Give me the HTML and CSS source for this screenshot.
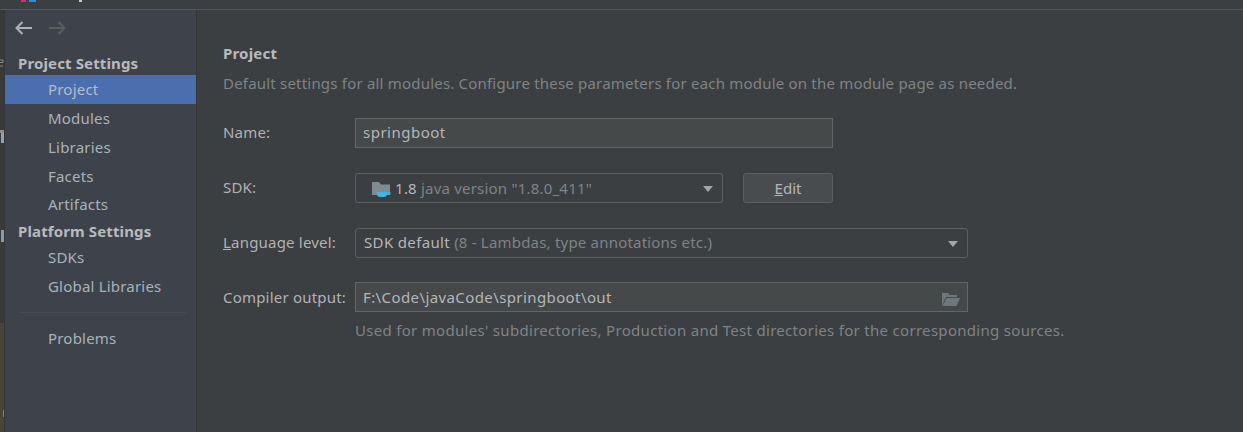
FILE: index.html
```html
<!DOCTYPE html>
<html lang="en">
<head>
<meta charset="utf-8">
<title>Project Structure</title>
<link rel="stylesheet" href="styles.css">
</head>
<body>
<div class="titlebar"><span class="logo"><i class="l1"></i><i class="l2"></i><i class="l3"></i></span></div>
<div class="window">
  <div class="gutter">
    <div class="gutter-dark"></div><div class="gutter-olive"></div>
    <svg class="mark mark-e" width="4" height="8" viewBox="0 0 4 8"><path d="M0 1h3v2.500H0M0 7h3" fill="none" stroke="#85878a"/></svg>
    <i class="mark mark-a"></i>
    <i class="mark mark-b"></i>
    <i class="mark mark-c"></i>
    <i class="mark mark-d"></i>
  </div>
  <nav class="sidebar">
    <div class="arrows">
      <svg width="18" height="14" viewBox="0 0 18 14"><path d="M1.500 7H17M7.500 1L1.500 7l6 6" fill="none" stroke="#afb1b3" stroke-width="2"/></svg>
      <svg width="18" height="14" viewBox="0 0 18 14"><path d="M16.500 7H1M10.500 1l6 6-6 6" fill="none" stroke="#5a5d5f" stroke-width="2"/></svg>
    </div>
    <div class="heading">Project Settings</div>
    <div class="item selected">Project</div>
    <div class="item">Modules</div>
    <div class="item">Libraries</div>
    <div class="item short">Facets</div>
    <div class="item">Artifacts</div>
    <div class="heading second">Platform Settings</div>
    <div class="item">SDKs</div>
    <div class="item">Global Libraries</div>
    <div class="rule"></div>
    <div class="item">Problems</div>
  </nav>
  <main class="content">
    <h1 class="title">Project</h1>
    <p class="desc">Default settings for all modules. Configure these parameters for each module on the module page as needed.</p>
    <div class="row name-row">
      <label class="label">Name:</label>
      <div class="field name-field">springboot</div>
    </div>
    <div class="row sdk-row">
      <label class="label">SDK:</label>
      <div class="combo sdk-combo">
        <svg class="sdk-icon" width="20" height="18" viewBox="0 0 20 18"><path d="M0 2h7l2 2.500h9V15H0z" fill="#7f8b91"/><path d="M5 12h10v2a3 3 0 0 1-3 3H8a3 3 0 0 1-3-3z" fill="#40b6e0"/><path d="M15 12.500h3v2h-3" fill="none" stroke="#40b6e0"/></svg>
        <span class="value">1.8</span> <span class="muted">java version "1.8.0_411"</span>
        <i class="caret"></i>
      </div>
      <button class="btn"><u>E</u>dit</button>
    </div>
    <div class="row lang-row">
      <label class="label"><u>L</u>anguage level:</label>
      <div class="combo lang-combo">
        <span class="value">SDK default</span> <span class="muted">(8 - Lambdas, type annotations etc.)</span>
        <i class="caret"></i>
      </div>
    </div>
    <div class="row out-row">
      <label class="label">Compiler output:</label>
      <div class="field out-field">F:\Code\javaCode\springboot\out
        <svg class="folder" width="20" height="16" viewBox="0 0 20 16"><path d="M1 15V2h6l2 2h7v2H5z" fill="#6e777b"/><path d="M5.500 7H19l-3.500 8H1.500z" fill="#6e777b"/></svg>
      </div>
    </div>
    <p class="hint">Used for modules' subdirectories, Production and Test directories for the corresponding sources.</p>
  </main>
</div>
</body>
</html>
```

FILE: styles.css
```css
* { box-sizing: border-box; }
html, body { margin: 0; height: 432px; overflow: hidden; }
body {
  background: #3c3f41;
  font-family: "Noto Sans", "Open Sans", sans-serif;
  font-size: 15px;
  letter-spacing: .2px;
  color: #b4b6b8;
}
.titlebar {
  height: 10px;
  background: #3c3f41;
  border-bottom: 1px solid #555758;
  padding-left: 21px;
  overflow: hidden;
}
.logo { display: flex; gap: 3px; }
.logo i { display: block; height: 2px; }
.l1 { width: 5px; background: #e5266f; }
.l2 { width: 7px; background: #1f8fe8; }
.logo .l3 { width: 3px; margin-left: 40px; background: #c9c9c9; }
.window { display: flex; height: 422px; }
.gutter {
  position: relative;
  width: 5px;
  display: flex;
  flex-direction: column;
  border-right: 1px solid #333537;
  overflow: hidden;
}
.gutter-dark { height: 313px; background: #393939; }
.gutter-olive { flex: 1; background: #47443a; }
.mark { position: absolute; display: block; }
.mark-e { left: 0; top: 49px; }
.mark-a { left: 0; top: 120px; width: 4px; height: 3px; background: #8f8f8f; }
.mark-b { left: 1px; top: 123px; width: 3px; height: 10px; background: #8fa3b3; }
.mark-c { left: 1px; top: 220px; width: 3px; height: 12px; background: #7f9fb0; }
.mark-d { left: 3px; top: 400px; width: 1px; height: 7px; background: #8f8f20; }
.sidebar {
  width: 192px;
  background: #3e434b;
  border-right: 1px solid #333537;
}
.arrows { display: flex; gap: 15px; height: 33px; padding: 11px 0 0 10px; }
.heading { height: 32px; padding: 9px 0 0 13px; line-height: 22px; font-weight: 700; letter-spacing: .13px; color: #b8babc; }
.heading.second { height: 24px; padding-top: 1px; }
.item { height: 29px; line-height: 28px; padding-left: 43px; color: #a9b2ba; }
.item.short { height: 28px; }
.selected { background: #4b6eaf; color: #b5bdc9; }
.rule { height: 1px; margin: 11px 10px 11px 15px; background: #484c52; }
.content { flex: 1; padding: 32px 0 0 26px; min-width: 0; }
.title { margin: 0; font-size: 15px; line-height: 22px; font-weight: 700; color: #b8babc; }
.desc { margin: 8px 0 0; line-height: 22px; color: #7f8386; }
.row { display: flex; align-items: center; }
.label { width: 132px; flex: none; padding-bottom: 2px; color: #b0b2b4; }
.out-row .label { padding-bottom: 0; }
.name-row { margin-top: 24px; }
.sdk-row { margin-top: 25px; }
.lang-row { margin-top: 25px; }
.out-row { margin-top: 24px; }
.field {
  height: 30px;
  background: #45494a;
  border: 1px solid #646464;
  padding: 0 7px;
  line-height: 27px;
  color: #b4b6b8;
  position: relative;
}
.name-field { width: 478px; letter-spacing: .5px; }
.out-field { width: 613px; line-height: 29px; letter-spacing: .4px; }
.combo {
  height: 30px;
  border: 1px solid #5e6060;
  border-radius: 3px;
  background: #3c3f41;
  line-height: 28px;
  padding-left: 8px;
  position: relative;
  white-space: nowrap;
}
.sdk-combo { width: 368px; padding-left: 16px; }
.lang-combo { width: 613px; line-height: 26px; }
.lang-combo .value { letter-spacing: .35px; }
.sdk-icon { vertical-align: -4px; margin-right: -1px; }
.value { color: #b4b6b8; }
.muted { color: #7f8386; }
.caret {
  position: absolute;
  right: 9px;
  top: 12px;
  border-left: 5.500px solid transparent;
  border-right: 5.500px solid transparent;
  border-top: 6px solid #a4a6a8;
}
.btn {
  margin-left: 20px;
  width: 90px;
  height: 30px;
  background: #494c4e;
  border: 1px solid #5e6060;
  border-radius: 3px;
  font: inherit;
  color: #b4b6b8;
  padding: 0;
}
.folder { position: absolute; right: 6px; top: 8px; }
.hint { margin: 7px 0 0 132px; line-height: 22px; color: #7f8386; letter-spacing: .3px; }
```
